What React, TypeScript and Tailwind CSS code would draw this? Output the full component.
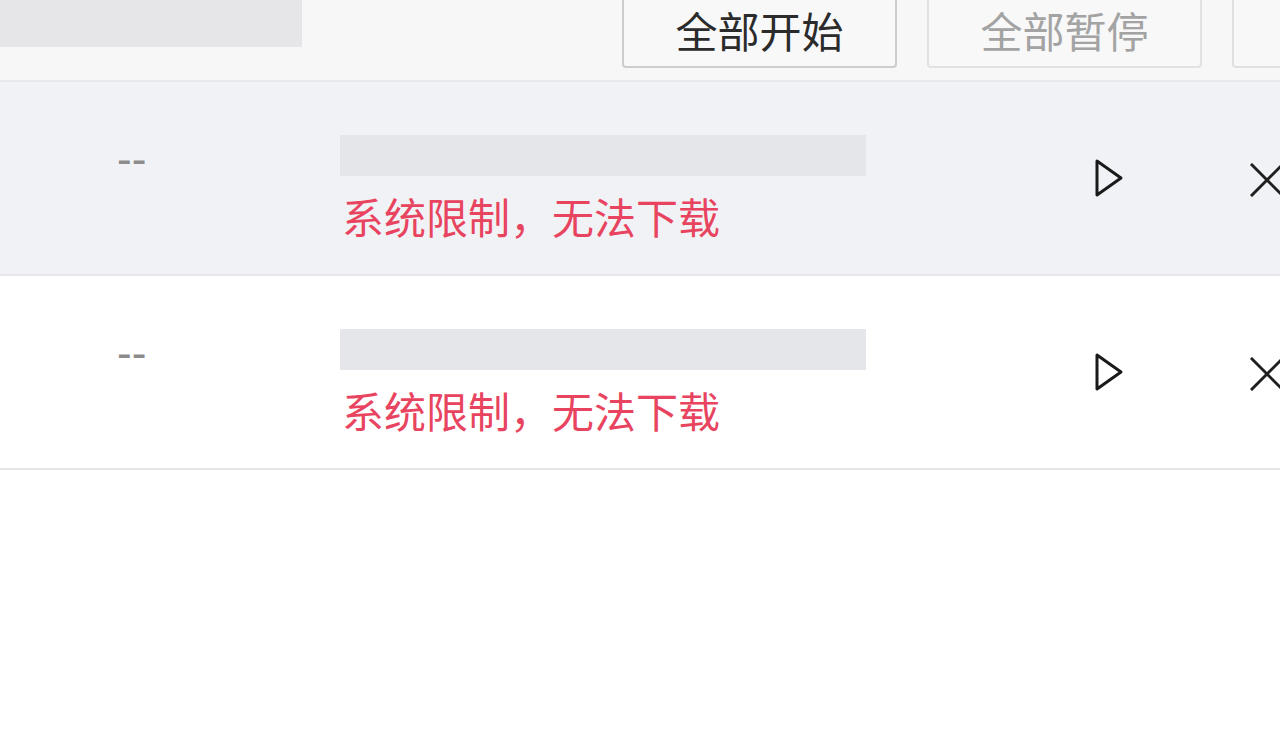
const rows = [
  { id: 1, bg: "bg-[#f1f2f5]" },
  { id: 2, bg: "bg-white" },
];

function PlayIcon() {
  return (
    <svg width="30" height="40" viewBox="0 0 30 40" fill="none" className="block">
      <path d="M3 3 L27 20 L3 37 Z" stroke="#1a1a1a" strokeWidth="3" strokeLinejoin="round" />
    </svg>
  );
}

function CloseIcon() {
  return (
    <svg width="34" height="34" viewBox="0 0 34 34" fill="none" className="block">
      <path d="M2 2 L32 32 M32 2 L2 32" stroke="#1f1f1f" strokeWidth="3" strokeLinecap="square" />
    </svg>
  );
}

export default function App() {
  return (
    <div className="h-[756px] w-[1280px] overflow-hidden bg-white font-['Noto_Sans_CJK_SC','Noto_Sans',sans-serif]">
      {/* toolbar */}
      <div className="flex h-[82px] border-b-2 border-[#e8e8ea] bg-[#f7f7f7]">
        <div className="h-[47px] w-[302px] shrink-0 bg-[#e6e6e9]" />
        <div className="ml-[320px] flex shrink-0 gap-[30px]">
          <button className="flex h-[68px] w-[275px] shrink-0 items-center justify-center rounded-b-[4px] border-x-2 border-b-2 border-[#cdcdcd] bg-[#f8f8f8] pb-[6px] text-[42px] leading-none text-[#2b2b2b]">
            全部开始
          </button>
          <button className="flex h-[68px] w-[275px] shrink-0 items-center justify-center rounded-b-[4px] border-x-2 border-b-2 border-[#e2e2e2] bg-[#f8f8f8] pb-[6px] text-[42px] leading-none text-[#a3a3a3]">
            全部暂停
          </button>
          <button className="h-[68px] w-[275px] shrink-0 rounded-b-[4px] border-x-2 border-b-2 border-[#e0e0e0] bg-[#f8f8f8]" />
        </div>
      </div>

      {/* task list */}
      {rows.map((row) => (
        <div key={row.id} className={`flex h-[194px] items-start border-b-2 border-[#e5e6e8] ${row.bg}`}>
          <div className="mt-[55px] w-[340px] shrink-0 pl-[117px] font-['Liberation_Sans',sans-serif] text-[44px] leading-none text-[#8c8c8c]">
            --
          </div>
          <div className="mt-[53px] w-[526px] shrink-0">
            <div className="h-[41px] bg-[#e5e6e9]" />
            <div className="mt-[15px] whitespace-nowrap pl-[2px] text-[42px] leading-[1.2] text-[#e8445f]">
              系统限制，无法下载
            </div>
          </div>
          <div className="ml-[228px] mt-[76px] shrink-0">
            <PlayIcon />
          </div>
          <div className="ml-[126px] mt-[81px] shrink-0">
            <CloseIcon />
          </div>
        </div>
      ))}
    </div>
  );
}
